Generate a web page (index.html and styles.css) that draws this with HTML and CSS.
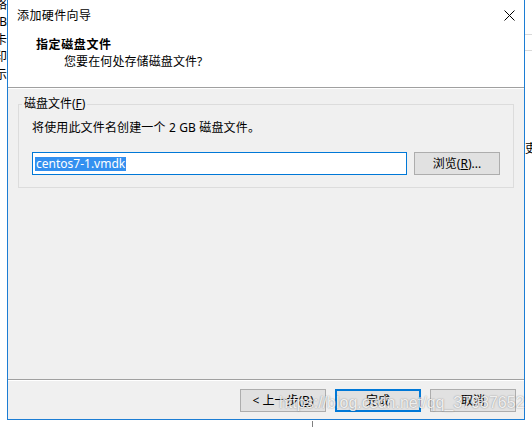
FILE: index.html
```html
<!DOCTYPE html>
<html lang="zh-CN">
<head>
<meta charset="utf-8">
<title>添加硬件向导</title>
<link rel="stylesheet" href="styles.css">
</head>
<body>
<div class="left-bg">
  <div class="left-chars">
    <div>络</div>
    <div>B</div>
    <div>卡</div>
    <div>印</div>
    <div>示</div>
  </div>
</div>
<div class="center">
  <div class="window">
    <div class="header">
      <div class="titlebar">
        <span class="title">添加硬件向导</span>
        <svg class="close" width="11" height="11" viewBox="0 0 11 11"><path d="M0.5 0.5 L10.5 10.5 M10.5 0.5 L0.5 10.5" stroke="#000" stroke-width="1" fill="none"/></svg>
      </div>
      <div class="heading">指定磁盘文件</div>
      <div class="subheading">您要在何处存储磁盘文件?</div>
    </div>
    <div class="body">
      <fieldset class="group">
        <legend class="legend">磁盘文件(<u>F</u>)</legend>
        <div class="desc">将使用此文件名创建一个 2 GB 磁盘文件。</div>
        <div class="file-row">
          <div class="input"><span class="sel">centos7-1.vmdk</span></div>
          <button class="btn browse">浏览(<u>R</u>)...</button>
        </div>
      </fieldset>
    </div>
    <div class="footer">
      <button class="btn">&lt; 上一步(<u>B</u>)</button>
      <button class="btn default">完成</button>
      <button class="btn">取消</button>
    </div>
  </div>
  <div class="below"><div class="vline"></div></div>
</div>
<div class="right-bg">
  <div class="hline first"></div>
  <div class="hline second"></div>
  <div class="right-char">吏</div>
</div>
<div class="watermark">https://blog.csdn.net/qq_37987652</div>
</body>
</html>
```
FILE: styles.css
```css
html, body {
  margin: 0;
  padding: 0;
  background: #fff;
}
body {
  width: 532px;
  height: 427px;
  overflow: hidden;
  display: flex;
  position: relative;
  font-family: "Noto Sans", "Noto Sans CJK SC", sans-serif;
  font-size: 12px;
  color: #000;
}
.left-bg {
  width: 7px;
  overflow: hidden;
  flex: none;
}
.left-chars {
  width: 20px;
  margin-left: -13px;
  margin-top: -4px;
  text-align: right;
  line-height: 17.4px;
  font-size: 12px;
}
.center {
  width: 518px;
  flex: none;
  display: flex;
  flex-direction: column;
}
.window {
  width: 516px;
  height: 419px;
  border: 1px solid #1c7dd4;
  border-top: none;
  background: #f0f0f0;
  display: flex;
  flex-direction: column;
}
.header {
  height: 87px;
  background: #fff;
  border-bottom: 1px solid #a0a0a0;
  flex: none;
}
.titlebar {
  display: flex;
  justify-content: space-between;
  align-items: flex-start;
  padding: 9px 9px 0 9px;
  height: 14px;
}
.title {
  line-height: 14px;
  font-size: 12px;
  letter-spacing: 0.4px;
}
.close {
  margin-top: 1px;
  display: block;
}
.heading {
  margin-top: 15px;
  padding-left: 28px;
  font-weight: bold;
  line-height: 14px;
  letter-spacing: 0.6px;
}
.subheading {
  margin-top: 3px;
  padding-left: 56px;
  line-height: 14px;
  letter-spacing: 0.1px;
}
.body {
  height: 291px;
  box-sizing: border-box;
  border-top: 1px solid #fff;
  padding: 8px 10px 0 10px;
  flex: none;
}
.group {
  margin: 0;
  padding: 0 13px 12px 13px;
  border: 1px solid #dcdcdc;
  min-width: 0;
}
.legend {
  padding: 0 2px;
  margin-left: -10px;
  line-height: 14px;
}
.desc {
  margin-top: 9px;
  line-height: 16px;
  letter-spacing: 0.15px;
}
.file-row {
  margin-top: 16px;
  display: flex;
  gap: 7px;
  height: 23px;
}
.input {
  flex: 1;
  box-sizing: border-box;
  height: 23px;
  border: 1px solid #0078d7;
  background: #fff;
  padding: 0 2px;
  display: flex;
  align-items: center;
}
.sel {
  background: #3390f0;
  color: #fff;
  line-height: 14px;
  padding: 0 1px;
}
.btn {
  box-sizing: border-box;
  width: 86px;
  height: 23px;
  border: 1px solid #adadad;
  background: #e1e1e1;
  font-family: "Noto Sans", "Noto Sans CJK SC", sans-serif;
  font-size: 12px;
  color: #000;
  padding: 0;
  margin: 0;
  line-height: 14px;
}
.browse {
  flex: none;
}
.default {
  border: 2px solid #0078d7;
}
.footer {
  flex: none;
  height: 40px;
  box-sizing: border-box;
  border-top: 1px solid #a0a0a0;
  box-shadow: inset 0 1px 0 #fff;
  padding: 9px 8px 0 0;
  display: flex;
  justify-content: flex-end;
  align-items: flex-start;
  gap: 9px;
}
.below {
  flex: 1;
}
.vline {
  margin-left: 305px;
  margin-top: 1px;
  width: 1px;
  height: 7px;
  background: #808080;
}
.right-bg {
  width: 7px;
  flex: none;
  overflow: hidden;
  position: relative;
}
.hline {
  height: 1px;
  background: #dadada;
}
.hline.first {
  margin-top: 34px;
}
.hline.second {
  margin-top: 15px;
}
.right-char {
  margin-top: 91px;
  line-height: 14px;
  width: 20px;
  margin-left: 0;
}
.watermark {
  position: absolute;
  left: 279px;
  top: 394px;
  font-family: "Liberation Sans", sans-serif;
  font-size: 16px;
  color: rgba(255, 255, 255, 0.85);
  text-shadow: 0 0 1.5px rgba(0, 0, 0, 0.45);
  white-space: nowrap;
  pointer-events: none;
}
```
